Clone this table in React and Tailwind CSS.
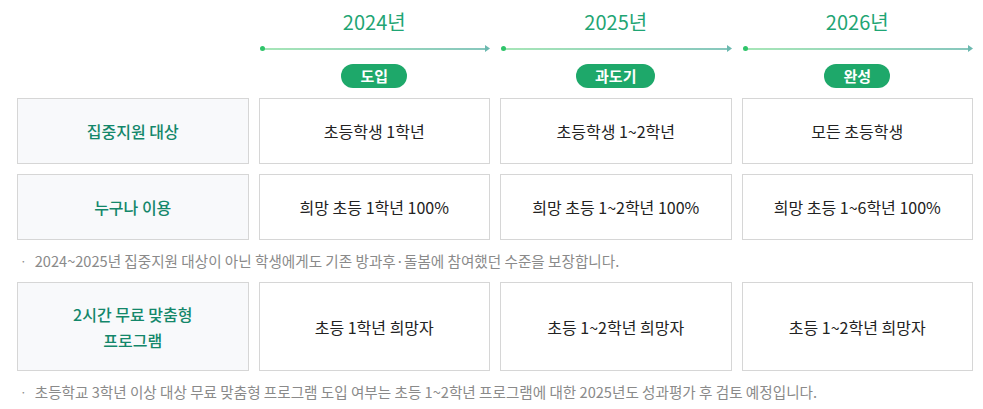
import React from 'react';

const years = [
  { year: '2024년', stage: '도입' },
  { year: '2025년', stage: '과도기' },
  { year: '2026년', stage: '완성' },
];

const rows = [
  { label: ['집중지원 대상'], cells: ['초등학생 1학년', '초등학생 1~2학년', '모든 초등학생'], h: 'h-[66px]' },
  { label: ['누구나 이용'], cells: ['희망 초등 1학년 100%', '희망 초등 1~2학년 100%', '희망 초등 1~6학년 100%'], h: 'h-[66px]' },
];

const Note = ({ children, className }) => (
  <p className={`flex items-center gap-[8px] pl-[20px] text-[14.6px] text-[#8a8a8a] ${className}`}>
    <span className="text-[12px]">·</span>
    <span>{children}</span>
  </p>
);

const Row = ({ label, cells, h }) => (
  <div className="grid grid-cols-4 gap-[10px]">
    <div className={`${h} flex flex-col items-center justify-center border border-[#d6d6d6] bg-[#f8f9fb] text-[16px] font-medium leading-[26px] text-[#13876a]`}>
      {label.map((l) => <span key={l}>{l}</span>)}
    </div>
    {cells.map((c, i) => (
      <div key={i} className={`${h} flex items-center justify-center border border-[#d6d6d6] bg-white text-[16px] text-[#222]`}>
        {c}
      </div>
    ))}
  </div>
);

export default function App() {
  return (
    <div className="w-[983px] h-[409px] bg-white pl-[17px] pr-[10px] overflow-hidden" style={{ fontFamily: '"Noto Sans CJK KR", "Noto Sans", sans-serif' }}>
      <div className="grid grid-cols-4 gap-[10px]">
        <div />
        {years.map((y) => (
          <div key={y.year} className="flex flex-col items-center">
            <div className="pt-[7px] h-[42px] text-[20px] leading-[30px] text-[#1fa574]">{y.year}</div>
            <div className="relative w-full h-[13px] flex items-center">
              <span className="absolute left-[1px] w-[5px] h-[5px] rounded-full bg-[#2fc46a]" />
              <div className="ml-[2px] flex-1 h-[2px] bg-gradient-to-r from-[#a7e6b7] to-[#87c7bd]" />
              <svg width="5" height="7" viewBox="0 0 5 7" className="shrink-0 -ml-[1px]">
                <path d="M0 0 L5 3.5 L0 7 Z" fill="#6cb9b0" />
              </svg>
            </div>
            <div className="mt-[9px] h-[24px] px-[19px] rounded-full bg-[#1ea86a] flex items-center text-[15px] font-bold text-white">
              {y.stage}
            </div>
          </div>
        ))}
      </div>

      <div className="mt-[10px] flex flex-col gap-[10px]">
        {rows.map((r) => <Row key={r.label[0]} {...r} />)}
      </div>

      <Note className="h-[42px] -ml-[17px]">2024~2025년 집중지원 대상이 아닌 학생에게도 기존 방과후·돌봄에 참여했던 수준을 보장합니다.</Note>

      <Row label={['2시간 무료 맞춤형', '프로그램']} cells={['초등 1학년 희망자', '초등 1~2학년 희망자', '초등 1~2학년 희망자']} h="h-[89px]" />

      <Note className="h-[42px] -ml-[17px]">초등학교 3학년 이상 대상 무료 맞춤형 프로그램 도입 여부는 초등 1~2학년 프로그램에 대한 2025년도 성과평가 후 검토 예정입니다.</Note>
    </div>
  );
}
